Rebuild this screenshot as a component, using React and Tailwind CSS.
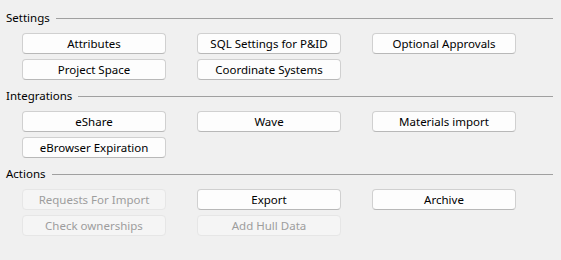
const sections = [
  {
    title: "Settings",
    buttons: [
      { label: "Attributes" },
      { label: "SQL Settings for P&ID" },
      { label: "Optional Approvals" },
      { label: "Project Space" },
      { label: "Coordinate Systems" },
    ],
  },
  {
    title: "Integrations",
    buttons: [
      { label: "eShare" },
      { label: "Wave" },
      { label: "Materials import" },
      { label: "eBrowser Expiration" },
    ],
  },
  {
    title: "Actions",
    buttons: [
      { label: "Requests For Import", disabled: true },
      { label: "Export" },
      { label: "Archive" },
      { label: "Check ownerships", disabled: true },
      { label: "Add Hull Data", disabled: true },
    ],
  },
];

function Section({ title, buttons }) {
  return (
    <div className="flex flex-col pb-[8px]">
      {/* heading with rule */}
      <div className="flex items-center h-[16px] pl-[6px] pr-[8px]">
        <span className="text-[11.5px] leading-none text-black pr-[6px]">{title}</span>
        <div className="flex-1 h-px bg-[#a0a0a0]" />
      </div>

      <div className="grid grid-cols-[144px_144px_144px] gap-x-[31px] gap-y-[5px] pl-[22px] mt-[7px]">
        {buttons.map((b) => (
          <button
            key={b.label}
            disabled={b.disabled}
            className={`h-[21px] rounded-[4px] border text-[11.5px] leading-none ${
              b.disabled
                ? "bg-[#f5f5f5] border-[#e6e6e6] text-[#9d9d9d]"
                : "bg-[#fdfdfd] border-[#d0d0d0] border-b-[#b8b8b8] text-black"
            }`}
          >
            {b.label}
          </button>
        ))}
      </div>
    </div>
  );
}

export default function App() {
  return (
    <div
      className="w-[561px] h-[260px] bg-[#f0f0f0] pt-[10px] overflow-hidden"
      style={{ fontFamily: '"Noto Sans", "Segoe UI", sans-serif' }}
    >
      {sections.map((s) => (
        <Section key={s.title} {...s} />
      ))}
    </div>
  );
}
